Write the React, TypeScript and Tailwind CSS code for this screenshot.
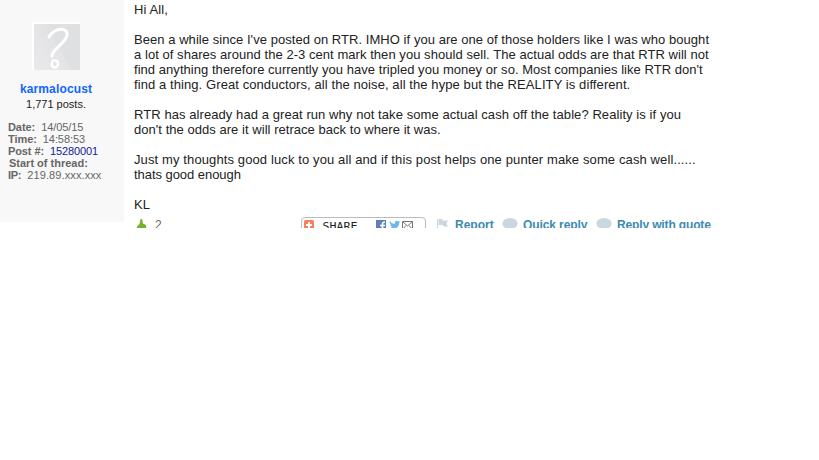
const lines = [
  { text: 'Hi All,', className: 'tracking-[0.12px]' },
  { text: '', className: '' },
  { text: "Been a while since I've posted on RTR. IMHO if you are one of those holders like I was who bought", className: 'tracking-[0.05px]' },
  { text: 'a lot of shares around the 2-3 cent mark then you should sell. The actual odds are that RTR will not', className: 'tracking-[0.05px]' },
  { text: "find anything therefore currently you have tripled you money or so. Most companies like RTR don't", className: 'tracking-[0.045px]' },
  { text: 'find a thing. Great conductors, all the noise, all the hype but the REALITY is different.', className: 'tracking-[0.085px]' },
  { text: '', className: '' },
  { text: 'RTR has already had a great run why not take some actual cash off the table? Reality is if you', className: 'tracking-[0.075px]' },
  { text: "don't the odds are it will retrace back to where it was.", className: 'tracking-[0.04px]' },
  { text: '', className: '' },
  { text: 'Just my thoughts good luck to you all and if this post helps one punter make some cash well......', className: 'tracking-[0.115px]' },
  { text: 'thats good enough', className: 'tracking-[-0.05px]' },
  { text: '', className: '' },
  { text: 'KL', className: 'tracking-normal' },
]

function Avatar() {
  return (
    <svg className="ml-8 block h-[48px] w-[49px]" viewBox="0 0 49 48" fill="none">
      <defs>
        <linearGradient id="shine" x1="0" y1="1" x2="1" y2="0">
          <stop offset="0" stopColor="#eaeaec" />
          <stop offset="1" stopColor="#dddee0" />
        </linearGradient>
      </defs>
      <path d="M0 0h48v2H2v46H0z" fill="#fff" />
      <path d="M2 2h46v46H2z" fill="#dfe0e2" />
      <path d="M2 2h13l24 46H2z" fill="url(#shine)" />
      <path d="M17 15C21 8 30 5 34 9c4 5-3 11-8 16-4 4-6 6-6 9" stroke="#fff" strokeWidth="3" strokeLinecap="round" />
      <path d="M21.500 38c-3 3-2 7.500 1 7.500 4 0 5-6 1-7" stroke="#fff" strokeWidth="2.4" strokeLinecap="round" />
    </svg>
  )
}

function Sidebar() {
  return (
    <aside className="h-[222px] w-[124px] shrink-0 bg-[#f8f8f8] pt-[22px]">
      <Avatar />
      <div className="mt-[11px] pr-3 text-center text-[12px] leading-4 font-bold tracking-[0.14px] text-[#1166ff]">karmalocust</div>
      <div className="pr-3 text-center text-[11px] leading-[14px] text-[#222]">1,771 posts.</div>
      <div className="mt-[10px] pl-2 text-[11px] leading-3 whitespace-pre text-[#666]">
        <div className="tracking-[-0.07px]"><b>Date:</b>{'  '}14/05/15</div>
        <div className="tracking-[-0.07px]"><b>Time:</b>{'  '}14:58:53</div>
        <div className="tracking-[-0.1px]"><b>Post #:</b>{'  '}<span className="text-[#112299]">15280001</span></div>
        <div className="pl-px"><b>Start of thread:</b></div>
        <div><b className="tracking-[-0.3px]">IP:</b>{'  '}<span className="tracking-[0.1px]">219.89.xxx.xxx</span></div>
      </div>
    </aside>
  )
}

function ShareButton() {
  return (
    <div className="ml-[139px] flex h-[18px] w-[125px] shrink-0 rounded-[4px] border border-[#bbb] bg-white">
      <svg className="h-[16px] w-[123px]" viewBox="0 0 123 16" fill="none">
        <rect x="2" y="2" width="10" height="10" rx="1.5" fill="#f87e5c" />
        <path d="M7 4v6M4 7h6" stroke="#fff" strokeWidth="2" />
        <rect x="74" y="2" width="10" height="10" fill="#5f7fbb" />
        <path d="M80.5 12V6q0-2 2.5-2M78 7.5h5" stroke="#fff" strokeWidth="1.6" />
        <path d="M88 3c1 2 3 3 5 2.500C92.500 3 95 2 96.500 3.500L98 3l-.8 2C97 10 92 12 88 10l2-1-2-2 1-.3-1.500-2z" fill="#6cb9e5" />
        <path d="M100.500 3.500h10v8h-10zM100.500 3.500l5 4.500 5-4.500M100.500 11.500l3.500-4M110.500 11.500l-3.500-4" stroke="#777" />
        <text x="20.500" y="12" fill="#222" fontSize="10" fontWeight="400" fontFamily="DejaVu Sans Mono, monospace" textLength="35" lengthAdjust="spacingAndGlyphs">SHARE</text>
      </svg>
    </div>
  )
}

function Bubble({ className }: { className: string }) {
  return (
    <svg className={className} viewBox="0 0 16 12">
      <ellipse cx="8" cy="5.500" rx="7.600" ry="5.500" fill="#cad7df" />
    </svg>
  )
}

function ActionBar() {
  return (
    <div className="flex h-[11px] items-start overflow-hidden text-[12px] leading-4 font-bold text-[#3c8ab0]">
      <svg className="mt-[2px] ml-[2px] h-[12px] w-[12px] shrink-0" viewBox="0 0 12 12">
        <path d="M4.500 0H6l1 4.500 3 1.500.5 6H.5l.5-4.500L3.500 5z" fill="#76b22f" />
      </svg>
      <span className="ml-[7px] w-[7px] font-normal text-[#666]">2</span>
      <ShareButton />
      <svg className="mt-[2px] ml-[11px] h-[11px] w-[12px] shrink-0" viewBox="0 0 12 11">
        <path d="M0 0h1v11H0z" fill="#cad7df" />
        <path d="M1.500 0h4v1.500H11L9.500 4.500l1.500 3H6V6H1.500z" fill="#cad7df" />
      </svg>
      <span className="ml-[6px] w-[40px]">Report</span>
      <Bubble className="mt-px ml-[7px] h-[12px] w-[16px] shrink-0" />
      <span className="ml-[5px] w-[65px] tracking-[-0.1px] whitespace-nowrap">Quick reply</span>
      <Bubble className="mt-px ml-[8px] h-[12px] w-[16px] shrink-0" />
      <span className="ml-[5px] tracking-[-0.14px] whitespace-nowrap">Reply with quote</span>
    </div>
  )
}

export default function App() {
  return (
    <div className="h-[460px] w-[819px] overflow-hidden bg-white font-['Liberation_Sans',Arial,sans-serif]">
      <article className="flex h-[228px] overflow-hidden">
        <Sidebar />
        <main className="w-[620px] pt-[2px] pl-[10px]">
          <div className="h-[215px] text-[13px] leading-[15px] whitespace-nowrap text-[#222]">
            {lines.map((line, i) => (
              <div key={i} className="h-[15px]">
                <span className={line.className}>{line.text}</span>
              </div>
            ))}
          </div>
          <ActionBar />
        </main>
      </article>
    </div>
  )
}
